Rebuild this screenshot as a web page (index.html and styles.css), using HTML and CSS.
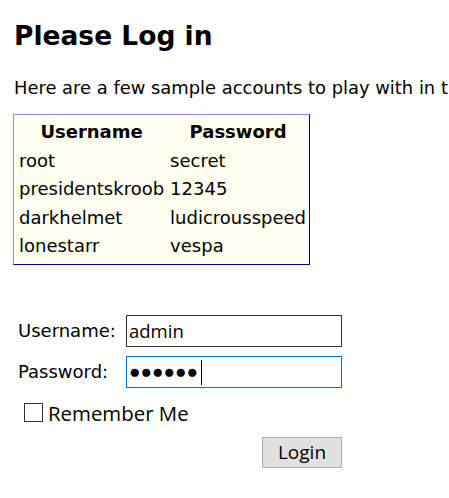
FILE: index.html
```html
<!DOCTYPE html>
<html>
<head>
<meta charset="utf-8">
<title>Please Log in</title>
<link rel="stylesheet" href="styles.css">
</head>
<body>
<h1 class="title">Please Log in</h1>
<p class="intro">Here are a few sample accounts to play with in the default text-based realm:</p>
<table class="accounts">
  <thead>
    <tr><th>Username</th><th>Password</th></tr>
  </thead>
  <tbody>
    <tr><td>root</td><td>secret</td></tr>
    <tr><td>presidentskroob</td><td>12345</td></tr>
    <tr><td>darkhelmet</td><td>ludicrousspeed</td></tr>
    <tr><td>lonestarr</td><td>vespa</td></tr>
  </tbody>
</table>
<form class="login" action="#" onsubmit="return false">
  <div class="fields">
    <label class="field-label" for="username">Username:</label>
    <input class="field-input" id="username" type="text" name="username" value="admin">
    <label class="field-label" for="password">Password:</label>
    <span class="pw-wrap">
      <input class="field-input focused pw-mask" id="password" type="text" name="password" value="●●●●●●" aria-label="Password (masked)">
      <span class="caret"></span>
    </span>
  </div>
  <label class="remember"><input class="remember-box" type="checkbox" name="rememberMe"><span>Remember Me</span></label>
  <div class="actions">
    <button class="login-btn" type="submit">Login</button>
  </div>
</form>
</body>
</html>
```

FILE: styles.css
```css
html, body {
  margin: 0;
  padding: 0;
  background: #ffffff;
  overflow: hidden;
}

body {
  padding: 0 13px;
  font-family: "DejaVu Sans", Verdana, sans-serif;
  color: #000;
}

.title {
  margin: 20px 0 0 1px;
  font-size: 26.5px;
  font-weight: bold;
  line-height: 31px;
}

.intro {
  margin: 26px 0 0 1px;
  font-size: 17.9px;
  line-height: 21px;
  white-space: nowrap;
}

.accounts {
  margin-top: 16px;
  border-collapse: separate;
  border-spacing: 0;
  padding: 3px 0 3px 2px;
  background: #fffff0;
  border: 1px solid;
  border-color: #8a8af0 #0000a0 #0000a0 #8a8af0;
  font-size: 18px;
}

.accounts th,
.accounts td {
  padding: 4px 3px;
  line-height: 20.5px;
}

.accounts th {
  font-weight: bold;
  text-align: center;
}

.accounts td {
  text-align: left;
}

.login {
  margin: 50px 0 0 5px;
}

.fields {
  display: grid;
  grid-template-columns: 108px 216px;
  row-gap: 9px;
  align-items: center;
}

.field-label {
  font-size: 18px;
}

.field-input {
  box-sizing: border-box;
  display: block;
  width: 216px;
  height: 32px;
  margin: 0;
  padding: 0 2px;
  border: 1px solid #333;
  border-radius: 0;
  font-family: "Open Sans", sans-serif;
  font-size: 18.5px;
  color: #000;
  background: #fff;
  outline: none;
}

.field-input.focused,
.field-input:focus {
  border-color: #0078d7;
}

.pw-wrap {
  position: relative;
  display: block;
}

.pw-mask {
  font-family: "Liberation Sans", sans-serif;
  font-size: 19px;
}

.caret {
  position: absolute;
  left: 75px;
  top: 4px;
  width: 1px;
  height: 25px;
  background: #000;
}

.remember {
  display: flex;
  align-items: center;
  gap: 5px;
  margin: 11px 0 0 6px;
  font-family: "Open Sans", sans-serif;
  font-size: 20.4px;
}

.remember-box {
  appearance: none;
  -webkit-appearance: none;
  width: 19px;
  height: 19px;
  margin: 0;
  border: 1px solid #333;
  background: #fff;
}

.actions {
  display: flex;
  justify-content: flex-end;
  width: 324px;
  margin-top: 10px;
}

.login-btn {
  box-sizing: border-box;
  width: 80px;
  height: 31px;
  margin: 0;
  padding: 0;
  border: 1px solid #adadad;
  border-radius: 0;
  background: #e1e1e1;
  font-family: "Open Sans", sans-serif;
  font-size: 19px;
  color: #000;
}
```
